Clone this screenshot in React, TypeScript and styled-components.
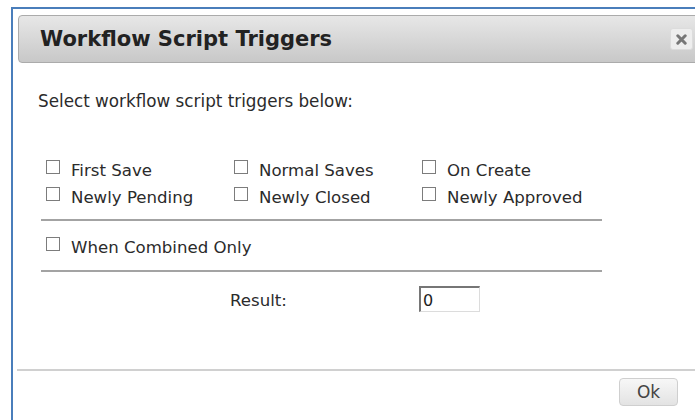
import React, { useState } from 'react';
import styled, { createGlobalStyle } from 'styled-components';

const GlobalStyle = createGlobalStyle`
  html, body {
    margin: 0;
    padding: 0;
    background: #ffffff;
    overflow: hidden;
  }
  body {
    font-family: 'DejaVu Sans', Verdana, sans-serif;
    color: #2b2b2b;
  }
`;

// Dialog frame: only the top and left edges fall inside the window
const Dialog = styled.div`
  margin: 7px 0 0 11px;
  width: 681px;
  height: 420px;
  padding: 6px 0 0 5px;
  border-top: 2px solid #4a7ebb;
  border-left: 2px solid #4a7ebb;
  background: #ffffff;
  display: flex;
  flex-direction: column;
`;

const TitleBar = styled.div`
  height: 46px;
  border: 1px solid #ababab;
  border-radius: 4px;
  background: linear-gradient(to bottom, #e7e7e7 0%, #d6d6d6 55%, #c8c8c8 100%);
  display: flex;
  align-items: center;
  justify-content: space-between;
  padding: 0 5px 0 21px;
`;

const Title = styled.h1`
  margin: 0;
  font-size: 21px;
  line-height: 46px;
  font-weight: bold;
  color: #222222;
`;

const CloseButton = styled.button`
  width: 23px;
  height: 22px;
  padding: 0;
  border: 1px solid #dcdcdc;
  border-radius: 3px;
  background: #eeeeee;
  display: flex;
  align-items: center;
  justify-content: center;
  cursor: pointer;
  flex-shrink: 0;
`;

const Content = styled.div`
  padding-left: 23px;
  width: 561px;
`;

const Intro = styled.p`
  margin: 28px 0 0 -3px;
  font-size: 16.8px;
  line-height: 20px;
`;

const TriggerGrid = styled.div`
  margin-top: 50px;
  display: grid;
  grid-template-columns: repeat(3, 188px);
  row-gap: 7px;
`;

const Option = styled.label`
  display: flex;
  align-items: flex-start;
  padding-left: 5px;
  font-size: 16.6px;
  line-height: 20px;
  white-space: nowrap;
  cursor: pointer;
`;

const Box = styled.input`
  appearance: none;
  width: 14px;
  height: 14px;
  margin: -1px 11px 0 0;
  border: 1px solid #7c7c7c;
  background: #ffffff;
  flex-shrink: 0;

  &:checked {
    background: #4a7ebb;
  }
`;

const Rule = styled.hr<{ $top: number }>`
  margin: ${(p) => p.$top}px 0 0;
  border: none;
  height: 2px;
  background: #a3a3a3;
`;

const SingleRow = styled.div`
  margin-top: 17px;
`;

const ResultRow = styled.div`
  margin-top: 14px;
  padding-left: 189px;
  display: grid;
  grid-template-columns: 189px auto;
  align-items: center;
`;

const ResultLabel = styled.span`
  font-size: 16.6px;
  line-height: 20px;
  padding-top: 3px;
`;

const ResultInput = styled.input`
  box-sizing: border-box;
  width: 61px;
  height: 26px;
  padding: 2px 2px 0;
  border-style: solid;
  border-width: 2px 1px 1px 2px;
  border-color: #767676 #dcdcdc #dcdcdc #767676;
  font-family: 'DejaVu Sans', sans-serif;
  font-size: 16px;
  color: #1e1e1e;
  outline: none;
`;

const Footer = styled.div`
  margin: 57px 0 0 -1px;
  border-top: 2px solid #d0d0d0;
  padding: 7px 21px 0 0;
  display: flex;
  justify-content: flex-end;
`;

const OkButton = styled.button`
  width: 59px;
  height: 28px;
  border: 1px solid #cfcfcf;
  border-radius: 4px;
  background: linear-gradient(to bottom, #f7f7f7, #e3e3e3);
  color: #444444;
  font-family: 'DejaVu Sans', sans-serif;
  font-size: 17px;
  padding: 0;
  cursor: pointer;
`;

const CloseIcon = () => (
  <svg width="11" height="11" viewBox="0 0 11 11">
    <path
      d="M1.8 1.8 L9.2 9.2 M9.2 1.8 L1.8 9.2"
      stroke="#777777"
      strokeWidth="3"
      strokeLinecap="round"
    />
  </svg>
);

const triggers = [
  'First Save',
  'Normal Saves',
  'On Create',
  'Newly Pending',
  'Newly Closed',
  'Newly Approved',
];

const App = () => {
  const [checked, setChecked] = useState<Record<string, boolean>>({});
  const [combined, setCombined] = useState(false);

  const result = triggers.reduce(
    (sum, name, i) => (checked[name] ? sum + (1 << i) : sum),
    combined ? 64 : 0
  );

  const toggle = (name: string) =>
    setChecked((prev) => ({ ...prev, [name]: !prev[name] }));

  return (
    <>
      <GlobalStyle />
      <Dialog>
        <TitleBar>
          <Title>Workflow Script Triggers</Title>
          <CloseButton aria-label="Close">
            <CloseIcon />
          </CloseButton>
        </TitleBar>
        <Content>
          <Intro>Select workflow script triggers below:</Intro>
          <TriggerGrid>
            {triggers.map((name) => (
              <Option key={name}>
                <Box
                  type="checkbox"
                  checked={!!checked[name]}
                  onChange={() => toggle(name)}
                />
                {name}
              </Option>
            ))}
          </TriggerGrid>
          <Rule $top={11} />
          <SingleRow>
            <Option>
              <Box
                type="checkbox"
                checked={combined}
                onChange={() => setCombined(!combined)}
              />
              When Combined Only
            </Option>
          </SingleRow>
          <Rule $top={12} />
          <ResultRow>
            <ResultLabel>Result:</ResultLabel>
            <ResultInput value={String(result)} readOnly />
          </ResultRow>
        </Content>
        <Footer>
          <OkButton>Ok</OkButton>
        </Footer>
      </Dialog>
    </>
  );
};

export default App;
